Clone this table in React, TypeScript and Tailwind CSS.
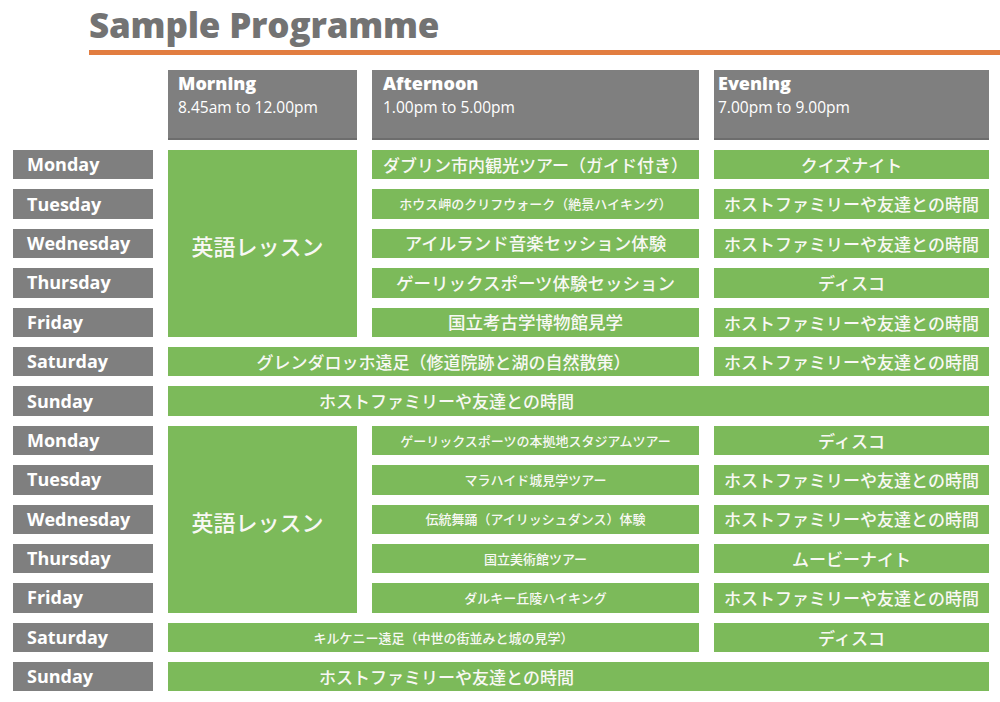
import React from "react";

const SANS = "font-['Open_Sans','Liberation_Sans',sans-serif]";
const JP = "font-['Noto_Sans_CJK_JP','Noto_Sans',sans-serif]";

const FAMILY = "ホストファミリーや友達との時間";

type Week = {
  afternoon: { text: string; size: string }[];
  evening: string[];
  saturday: { text: string; size: string };
};

const weeks: Week[] = [
  {
    afternoon: [
      { text: "ダブリン市内観光ツアー（ガイド付き）", size: "text-[17px]" },
      { text: "ホウス岬のクリフウォーク（絶景ハイキング）", size: "text-[13px]" },
      { text: "アイルランド音楽セッション体験", size: "text-[17.5px]" },
      { text: "ゲーリックスポーツ体験セッション", size: "text-[17.5px]" },
      { text: "国立考古学博物館見学", size: "text-[17.5px]" },
    ],
    evening: ["クイズナイト", FAMILY, FAMILY, "ディスコ", FAMILY, FAMILY],
    saturday: { text: "グレンダロッホ遠足（修道院跡と湖の自然散策）", size: "text-[17px]" },
  },
  {
    afternoon: [
      { text: "ゲーリックスポーツの本拠地スタジアムツアー", size: "text-[13px]" },
      { text: "マラハイド城見学ツアー", size: "text-[13px]" },
      { text: "伝統舞踊（アイリッシュダンス）体験", size: "text-[13px]" },
      { text: "国立美術館ツアー", size: "text-[13px]" },
      { text: "ダルキー丘陵ハイキング", size: "text-[13px]" },
    ],
    evening: ["ディスコ", FAMILY, FAMILY, "ムービーナイト", FAMILY, "ディスコ"],
    saturday: { text: "キルケニー遠足（中世の街並みと城の見学）", size: "text-[13px]" },
  },
];

const days = ["Monday", "Tuesday", "Wednesday", "Thursday", "Friday", "Saturday", "Sunday"];

const ROW_START = [
  "row-start-2",
  "row-start-3",
  "row-start-4",
  "row-start-5",
  "row-start-6",
  "row-start-7",
  "row-start-8",
  "row-start-9",
  "row-start-10",
  "row-start-11",
  "row-start-12",
  "row-start-13",
  "row-start-14",
  "row-start-15",
];

function Green({ className, children }: { className: string; children: React.ReactNode }) {
  return (
    <div
      className={`flex items-center justify-center bg-[#7cba5a] text-[#f8f8f4] font-medium ${JP} whitespace-nowrap ${className}`}
    >
      {children}
    </div>
  );
}

function Header({ title, time, pad }: { title: string; time: string; pad: string }) {
  return (
    <div className={`w-full bg-[#7f7f7f] border-b-2 border-[#6d6d6d] text-white ${SANS} ${pad} pt-[2px]`}>
      <div className="text-[18px] leading-[22px] font-extrabold">{title}</div>
      <div className="mt-[3px] text-[15.5px] leading-[20px]">{time}</div>
    </div>
  );
}

export default function App() {
  return (
    <div className="w-[1000px] h-[702px] bg-white overflow-hidden">
      <div className={`pl-[89px] pt-[7px] h-[50px] ${SANS}`}>
        <h1 className="text-[35px] leading-[36px] font-extrabold text-[#737373] tracking-[-0.2px]">
          Sample Programme
        </h1>
      </div>
      <div className="ml-[89px] h-[5px] bg-[#e27d40]" />

      <div className="mt-[15px] ml-[13px] grid grid-cols-[140px_189px_327px_275px] grid-rows-[70px_repeat(14,29.4px)] gap-x-[15px] gap-y-[10px]">
        <div className="row-start-1 col-start-1" />
        <div className="row-start-1 col-start-2 flex">
          <Header title="Morning" time="8.45am to 12.00pm" pad="pl-[10px]" />
        </div>
        <div className="row-start-1 col-start-3 flex">
          <Header title="Afternoon" time="1.00pm to 5.00pm" pad="pl-[11px]" />
        </div>
        <div className="row-start-1 col-start-4 flex">
          <Header title="Evening" time="7.00pm to 9.00pm" pad="pl-[4px]" />
        </div>

        {weeks.map((week, w) => {
          const base = w * 7;
          return (
            <React.Fragment key={w}>
              {days.map((d, i) => (
                <div
                  key={d}
                  className={`${ROW_START[base + i]} col-start-1 flex items-center bg-[#7f7f7f] pl-[14px] text-white text-[18px] font-bold ${SANS}`}
                >
                  {d}
                </div>
              ))}

              <Green className={`${ROW_START[base]} row-span-5 col-start-2 text-[22px] pt-[4px] pr-[10px]`}>
                英語レッスン
              </Green>

              {week.afternoon.map((a, i) => (
                <Green key={i} className={`${ROW_START[base + i]} col-start-3 ${a.size}`}>
                  {a.text}
                </Green>
              ))}

              {week.evening.map((e, i) => (
                <Green key={i} className={`${ROW_START[base + i]} col-start-4 text-[17px]`}>
                  {e}
                </Green>
              ))}

              <Green className={`${ROW_START[base + 5]} col-start-2 col-span-2 ${week.saturday.size} pl-[20px]`}>
                {week.saturday.text}
              </Green>

              <Green className={`${ROW_START[base + 6]} col-start-2 col-span-3 text-[17px] pr-[264px]`}>
                {FAMILY}
              </Green>
            </React.Fragment>
          );
        })}
      </div>
    </div>
  );
}
